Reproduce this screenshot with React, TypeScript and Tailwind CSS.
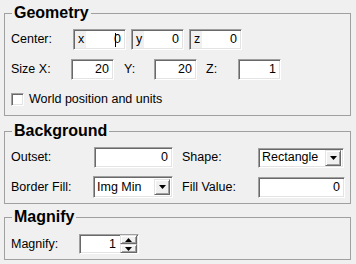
import React from "react";

const sunken =
  "border border-t-[#a0a0a0] border-l-[#a0a0a0] border-r-white border-b-white shadow-[inset_1px_1px_0_#696969,inset_-1px_-1px_0_#e3e3e3] bg-white";
const raised =
  "border border-t-[#e3e3e3] border-l-[#e3e3e3] border-r-[#696969] border-b-[#696969] shadow-[inset_1px_1px_0_#ffffff,inset_-1px_-1px_0_#a0a0a0] bg-[#f0f0f0]";

function Group({ title, className, children }: { title: string; className?: string; children: React.ReactNode }) {
  return (
    <fieldset className={"mx-[4px] w-[347px] border border-[#a0a0a0] p-0 " + (className || "")}>
      <legend className="ml-[7px] px-[2px] text-[16px] leading-[18px] font-bold text-black">{title}</legend>
      {children}
    </fieldset>
  );
}

function Field({ value, w, prefix, caret }: { value: string; w: string; prefix?: string; caret?: boolean }) {
  return (
    <div className={"flex h-[21px] items-center " + w + " " + sunken}>
      {prefix && (
        <span className="ml-[1px] flex h-[17px] w-[11px] items-center pl-[3px] bg-[#f0f0f0]">{prefix}</span>
      )}
      <span className="flex flex-1 items-center justify-end pr-[4px]">
        {caret && <span className="mr-[-2px] h-[14px] w-[1px] bg-black" />}
        {value}
      </span>
    </div>
  );
}

function Select({ value, w, h }: { value: string; w: string; h: string }) {
  return (
    <div className={"flex items-center " + w + " " + h + " " + sunken}>
      <span className="flex-1 pl-[3px]">{value}</span>
      <span className={"mr-[2px] flex h-[16px] w-[16px] items-center justify-center " + raised}>
        <svg width="7" height="4" viewBox="0 0 7 4">
          <path d="M0 0h7L3.5 4z" fill="#000" />
        </svg>
      </span>
    </div>
  );
}

export default function App() {
  return (
    <div
      className="h-[264px] w-[356px] overflow-hidden bg-[#f0f0f0] pt-[4px] text-[12.5px] leading-[15px] text-black"
      style={{ fontFamily: '"Liberation Sans", Arial, sans-serif' }}
    >
      <Group title="Geometry">
        <div className="px-[5px] pt-[7px] pb-[8px]">
          <div className="flex items-center">
            <span className="w-[63px] pl-[1px]">Center:</span>
            <div className="flex gap-[5px]">
              <Field w="w-[53px]" prefix="x" value="0" caret />
              <Field w="w-[53px]" prefix="y" value="0" />
              <Field w="w-[53px]" prefix="z" value="0" />
            </div>
          </div>
          <div className="mt-[9px] flex items-center">
            <span className="w-[61px] pl-[1px]">Size X:</span>
            <Field w="w-[43px]" value="20" />
            <span className="ml-[10px] w-[30px]">Y:</span>
            <Field w="w-[43px]" value="20" />
            <span className="ml-[9px] w-[32px]">Z:</span>
            <Field w="w-[43px]" value="1" />
          </div>
          <div className="mt-[12px] flex items-center">
            <span className={"ml-[1px] h-[13px] w-[13px] " + sunken} />
            <span className="ml-[5px]">World position and units</span>
          </div>
        </div>
      </Group>

      <Group title="Background" className="mt-[6px]">
        <div className="px-[5px] pt-[7px] pb-[5px]">
          <div className="flex items-center">
            <span className="w-[84px] pl-[1px]">Outset:</span>
            <Field w="w-[79px]" value="0" />
            <span className="ml-[9px] w-[76px]">Shape:</span>
            <Select w="w-[86px]" h="h-[20px]" value="Rectangle" />
          </div>
          <div className="mt-[8px] flex items-center">
            <span className="w-[83px] pl-[1px]">Border Fill:</span>
            <Select w="w-[80px]" h="h-[22px]" value="Img Min" />
            <span className="ml-[9px] w-[76px]">Fill Value:</span>
            <Field w="w-[87px]" value="0" />
          </div>
        </div>
      </Group>

      <Group title="Magnify" className="mt-[4px]">
        <div className="px-[5px] pt-[8px] pb-[5px]">
          <div className="flex items-center">
            <span className="w-[69px] pl-[1px]">Magnify:</span>
            <div className={"flex h-[20px] w-[60px] items-center " + sunken}>
              <span className="flex-1 pr-[4px] text-right">1</span>
              <div className="mr-[1px] flex flex-col">
                <span className={"flex h-[9px] w-[17px] items-center justify-center " + raised}>
                  <svg width="7" height="4" viewBox="0 0 7 4">
                    <path d="M3.5 0L7 4H0z" fill="#000" />
                  </svg>
                </span>
                <span className={"flex h-[9px] w-[17px] items-center justify-center " + raised}>
                  <svg width="7" height="4" viewBox="0 0 7 4">
                    <path d="M0 0h7L3.5 4z" fill="#000" />
                  </svg>
                </span>
              </div>
            </div>
          </div>
        </div>
      </Group>
    </div>
  );
}
